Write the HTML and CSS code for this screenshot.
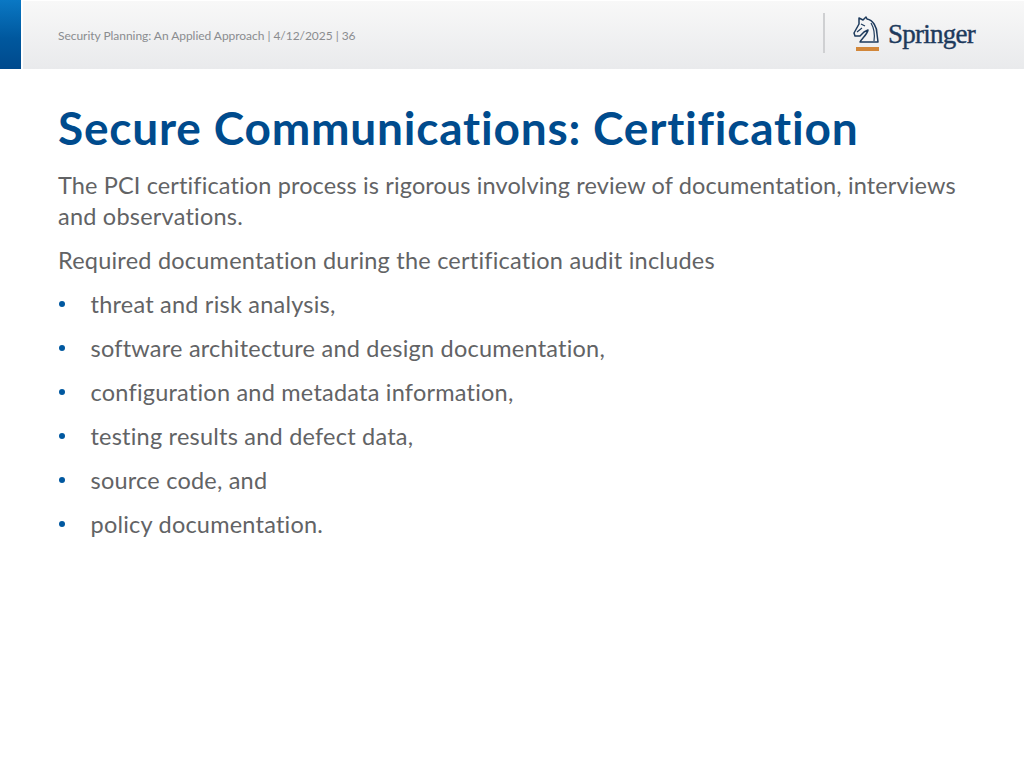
FILE: index.html
```html
<!DOCTYPE html>
<html lang="en">
<head>
<meta charset="utf-8">
<title>Secure Communications: Certification</title>
<link rel="stylesheet" href="styles.css">
</head>
<body>
<header class="band">
  <div class="accent"></div>
  <div class="bar">
    <div class="meta">Security Planning: An Applied Approach | 4/12/2025 | 36</div>
    <div class="divider"></div>
    <div class="logo">
      <svg class="horse" viewBox="0 0 28 36" width="28" height="36" aria-hidden="true">
        <path d="M1 17 L6 8 L6 2 L10 4 L13 1 L14 3 C20 4 24 11 24 18 L25 26 L7 26 C9 22 14 19 15 14 L11 16 L7 20 L2 20 Z" fill="#f4f4f5" stroke="#1d3a5c" stroke-width="1.5" stroke-linejoin="round"/>
        <path d="M18 7 C21 12 22 18 21 25 M8 8 L12 10 M4 16 L9 12" fill="none" stroke="#1d3a5c" stroke-width="1.2"/>
        <rect x="3" y="31" width="23" height="4" fill="#d2873a"/>
      </svg>
      <span class="word">Springer</span>
    </div>
  </div>
</header>
<main class="content">
  <h1>Secure Communications: Certification</h1>
  <p class="lead">The PCI certification process is rigorous involving review of documentation, interviews and observations.</p>
  <p class="second">Required documentation during the certification audit includes</p>
  <ul>
    <li>threat and risk analysis,</li>
    <li>software architecture and design documentation,</li>
    <li>configuration and metadata information,</li>
    <li>testing results and defect data,</li>
    <li>source code, and</li>
    <li>policy documentation.</li>
  </ul>
</main>
</body>
</html>
```
FILE: styles.css
```css
* { box-sizing: border-box; }
html, body { margin: 0; padding: 0; }
body {
  width: 1024px;
  height: 768px;
  overflow: hidden;
  background: #fff;
  font-family: "Lato", "Open Sans", sans-serif;
  font-variant-ligatures: none;
}
.band { display: flex; height: 69px; }
.accent {
  width: 21px;
  background: linear-gradient(180deg, #0a78c4 0%, #00589e 55%, #004a8d 100%);
}
.bar {
  flex: 1;
  margin-left: 2px;
  margin-top: 1px;
  padding-left: 35px;
  display: flex;
  align-items: center;
  background: linear-gradient(180deg, #f8f8f8 0%, #e9eaec 100%);
}
.meta {
  width: 765px;
  font-size: 12px;
  letter-spacing: -0.04px;
  color: #8a8c8f;
  white-space: nowrap;
}
.divider { width: 2px; height: 40px; background: #cfd0d2; margin-top: -4px; }
.logo { display: flex; align-items: center; margin-left: 28px; margin-top: -2px; }
.horse { display: block; }
.word {
  font-family: "Liberation Serif", serif;
  font-size: 27px;
  color: #1d3a5c;
  margin-left: 7px;
  letter-spacing: -0.75px;
  -webkit-text-stroke: 0.4px #1d3a5c;
}
.content { padding: 30px 58px 0; color: #626365; }
h1 {
  margin: 0;
  font-size: 46px;
  letter-spacing: 0.8px;
  line-height: 58px;
  font-weight: 700;
  color: #004b8d;
  white-space: nowrap;
}
p { margin: 0; font-size: 23.5px; line-height: 31px; letter-spacing: 0.22px; }
.lead { margin-top: 13px; }
.lead::first-line { letter-spacing: 0.13px; }
.second { margin-top: 13px; }
ul { list-style: none; margin: 13px 0 0; padding: 0; }
li {
  position: relative;
  padding-left: 32.5px;
  font-size: 23.5px;
  letter-spacing: 0.22px;
  line-height: 31px;
  margin-bottom: 13px;
}
li::before {
  content: "";
  position: absolute;
  left: 1px;
  top: 12px;
  width: 6px;
  height: 6px;
  border-radius: 50%;
  background: #0058a0;
}
```
